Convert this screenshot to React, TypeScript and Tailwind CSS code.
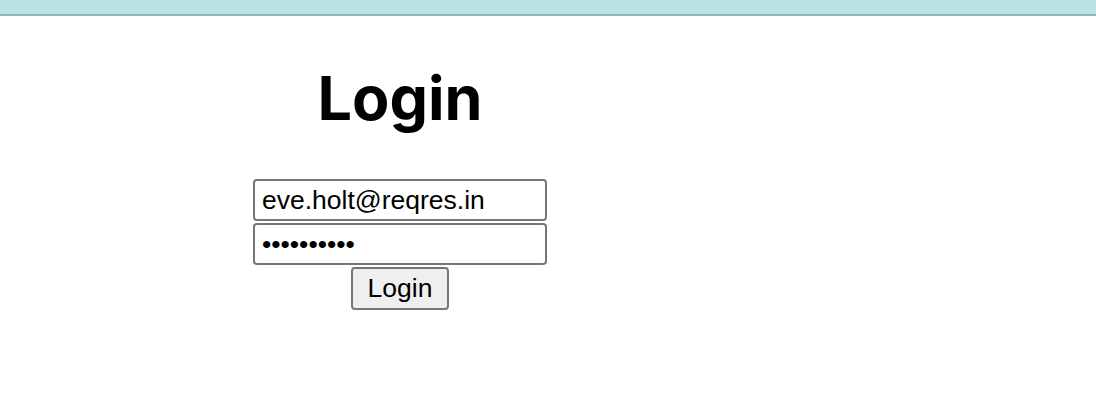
import React from 'react';

const inputClass =
  'box-border w-[294px] h-[42px] rounded-[4px] border-2 border-[#767676] bg-white px-[7px] text-[26.5px] text-black outline-none';

const App: React.FC = () => {
  return (
    <div className="min-h-[412px] bg-white font-['Liberation_Sans',Arial,sans-serif]">
      <div className="h-[16px] border-b-2 border-[#97b5b3] bg-[#b9e2e4]" />
      <div className="w-[800px] text-center">
        <h1 className="mt-[52px] h-[61px] font-['Inter',sans-serif] text-[61px] font-bold leading-none text-black">
          Login
        </h1>
        <form className="mt-[50px] flex flex-col items-center gap-[2px]" onSubmit={(e) => e.preventDefault()}>
          <input className={inputClass} type="email" defaultValue="eve.holt@reqres.in" />
          <input className={inputClass} type="password" defaultValue="cityslicka" />
          <button
            type="submit"
            className="box-border h-[43px] w-[98px] rounded-[4px] border-2 border-[#767676] bg-[#efefef] text-[26.5px] text-black"
          >
            Login
          </button>
        </form>
      </div>
    </div>
  );
};

export default App;
